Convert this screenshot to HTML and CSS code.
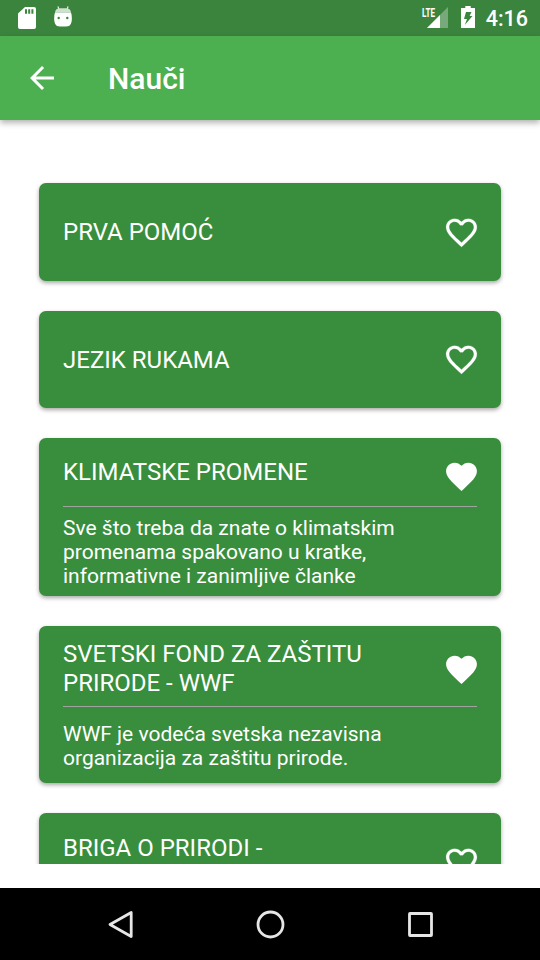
FILE: index.html
```html
<!DOCTYPE html>
<html lang="sr-Latn">
<head>
<meta charset="utf-8">
<title>Nauči</title>
<link rel="stylesheet" href="styles.css">
</head>
<body>
<svg class="defs" aria-hidden="true">
  <symbol id="heart" viewBox="0 0 24 24"><path fill="currentColor" d="M12 21.35l-1.45-1.32C5.4 15.36 2 12.28 2 8.5 2 5.42 4.42 3 7.5 3c1.74 0 3.41.81 4.5 2.09C13.09 3.81 14.76 3 16.5 3 19.58 3 22 5.42 22 8.5c0 3.78-3.4 6.86-8.55 11.54L12 21.35z"/></symbol>
  <symbol id="heart-outline" viewBox="0 0 24 24"><path fill="currentColor" stroke="currentColor" stroke-width=".1" d="M16.5 3c-1.74 0-3.41.81-4.5 2.09C10.91 3.81 9.24 3 7.5 3 4.42 3 2 5.42 2 8.5c0 3.78 3.4 6.86 8.55 11.54L12 21.35l1.45-1.32C18.6 15.36 22 12.28 22 8.5 22 5.42 19.58 3 16.5 3zm-4.4 15.55l-.1.1-.1-.1C7.14 14.24 4 11.39 4 8.5 4 6.5 5.5 5 7.5 5c1.54 0 3.04.99 3.57 2.36h1.87C13.46 5.99 14.96 5 16.5 5c2 0 3.5 1.5 3.5 3.5 0 2.89-3.14 5.74-7.9 10.05z"/></symbol>
</svg>
<div class="screen">
  <header class="status">
    <svg class="sd" width="18" height="22" viewBox="0 0 18 22"><path fill="#fff" fill-rule="evenodd" d="M7 0H16Q18 0 18 2V20Q18 22 16 22H2Q0 22 0 20V6.500ZM7 2.300V6.800H9V2.300ZM10.200 2.300V6.800H12.200V2.300ZM13.400 2.300V6.800H15.400V2.300Z"/></svg>
    <svg class="robot" width="18" height="21" viewBox="0 0 18 21"><path d="M4 .3L5 4M14 .3L13 4" stroke="#e4ede4" stroke-width="1.200"/><path fill="#cfe0cf" d="M1 6.500Q1.500 2.700 5 2.300H13Q16.500 2.700 17 6.500Z"/><path fill="#fff" d="M1 6.500H17Q18 9 17.800 14Q17.400 18.500 15 19.900Q9 21.300 3 19.900Q.6 18.500.2 14Q0 9 1 6.500Z"/><circle cx="4.700" cy="12" r="1.200" fill="#3b843e"/><circle cx="13.300" cy="12" r="1.200" fill="#3b843e"/></svg>
    <svg class="signal" width="26" height="24" viewBox="0 -3 26 24"><path fill="#78a97a" d="M26 0V21H5Z"/><path fill="#fff" d="M18 8V21H5Z"/><path fill="#3b843e" d="M0 0H14V10H0Z"/><text class="lte" x="0" y="9.500" textLength="13" lengthAdjust="spacingAndGlyphs">LTE</text></svg>
    <svg class="battery" width="14" height="22" viewBox="0 0 14 22"><path fill="#fff" d="M4.300 0H9.700V2H14V22H0V2H4.300Z"/><path fill="#3b843e" d="M5 6H10.500L8.600 10H11.500L3.800 19L6 13H3Z"/></svg>
    <span class="clock">4:16</span>
  </header>
  <nav class="appbar">
    <svg class="back" width="36" height="36" viewBox="0 0 24 24"><path fill="#fff" d="M20 11H7.830l5.590-5.590L12 4l-8 8 8 8 1.410-1.410L7.830 13H20v-2z"/></svg>
    <h1>Nauči</h1>
  </nav>
  <main class="list">
    <article class="card simple">
      <div class="head"><h2>PRVA POMOĆ</h2><svg class="heart"><use href="#heart-outline"/></svg></div>
    </article>
    <article class="card simple">
      <div class="head"><h2 class="lower">JEZIK RUKAMA</h2><svg class="heart"><use href="#heart-outline"/></svg></div>
    </article>
    <article class="card detailed climate">
      <div class="head"><h2>KLIMATSKE PROMENE</h2><svg class="heart"><use href="#heart"/></svg></div>
      <p>Sve što treba da znate o klimatskim promenama spakovano u kratke, informativne i zanimljive članke</p>
    </article>
    <article class="card detailed wwf">
      <div class="head"><h2>SVETSKI FOND ZA ZAŠTITU PRIRODE - WWF</h2><svg class="heart"><use href="#heart"/></svg></div>
      <p>WWF je vodeća svetska nezavisna organizacija za zaštitu prirode.</p>
    </article>
    <article class="card nature">
      <div class="head"><h2>BRIGA O PRIRODI -</h2><svg class="heart"><use href="#heart-outline"/></svg></div>
    </article>
  </main>
  <footer class="navbar">
    <svg width="30" height="30" viewBox="0 0 30 30"><path d="M26.200 2.500V26.500L5 14.500Z"/></svg>
    <svg width="30" height="30" viewBox="0 0 30 30"><circle cx="15.500" cy="14.500" r="12.500"/></svg>
    <svg width="30" height="30" viewBox="0 0 30 30"><rect x="4.500" y="3.500" width="22" height="22" rx=".5"/></svg>
  </footer>
</div>
</body>
</html>
```
FILE: styles.css
```css
* { box-sizing: border-box; }
body { margin: 0; background: #fff; color: #fff; font-family: Roboto, sans-serif; }
h1, h2, p { margin: 0; }
svg { display: block; flex: none; }
.defs { display: none; }
.screen { width: 540px; height: 960px; display: flex; flex-direction: column; overflow: hidden; }
.status { height: 36px; flex: none; display: flex; align-items: flex-start; padding: 6px 12px 0 18px; background: #3b843e; }
.sd { margin-top: 1px; }
.robot { margin-left: 18px; }
.signal { margin: -2px 0 0 auto; overflow: visible; }
.lte { font: 700 12.500px Roboto, sans-serif; fill: #fff; }
.battery { margin-left: 13px; }
.clock { margin-left: 11px; font-size: 21.500px; font-weight: 500; line-height: 26px; }
.appbar { height: 84px; flex: none; display: flex; align-items: center; padding-left: 24px; background: #4caf50; box-shadow: 0 3px 6px rgba(0,0,0,.3); z-index: 1; }
.appbar h1 { margin: 2px 0 0 48px; font-size: 30px; font-weight: 500; line-height: 36px; }
.list { height: 744px; flex: none; padding: 63px 39px 0; display: flex; flex-direction: column; gap: 30px; overflow: hidden; }
.card { flex: none; padding: 0 24px; background: #388e3c; border-radius: 7px; box-shadow: 0 2px 4px rgba(0,0,0,.35); }
.head { display: flex; justify-content: space-between; }
.head h2 { width: 330px; font-size: 24px; font-weight: 400; line-height: 29px; }
.heart { width: 37px; height: 37px; margin-right: -3px; color: #fff; }
.simple { height: 97.500px; }
.simple .head { padding-top: 30.500px; }
.simple h2 { padding-top: 4px; }
.simple .lower { padding-top: 5px; }
.detailed { height: 157.500px; }
.detailed .head { border-bottom: 1.500px solid #a0a3a0; }
.detailed p { width: 350px; font-size: 21px; line-height: 24px; }
.climate .head { height: 69px; padding-top: 19.500px; }
.climate h2 { padding-top: .5px; }
.climate p { padding-top: 9px; }
.wwf .head { height: 81.500px; padding-top: 14px; }
.wwf h2 { padding-top: .5px; }
.wwf .heart { margin-top: 11.500px; }
.wwf p { padding-top: 15px; }
.nature { height: 157.500px; padding-top: 20px; }
.nature h2 { padding-top: 1px; }
.nature .heart { margin-top: 10.500px; }
.navbar { height: 72px; margin-top: 24px; flex: none; display: flex; justify-content: space-between; align-items: flex-start; padding: 22px 105px 0; background: #000; }
.navbar path, .navbar circle, .navbar rect { fill: none; stroke: #e6e6e6; stroke-width: 2.800; stroke-linejoin: round; }
```
